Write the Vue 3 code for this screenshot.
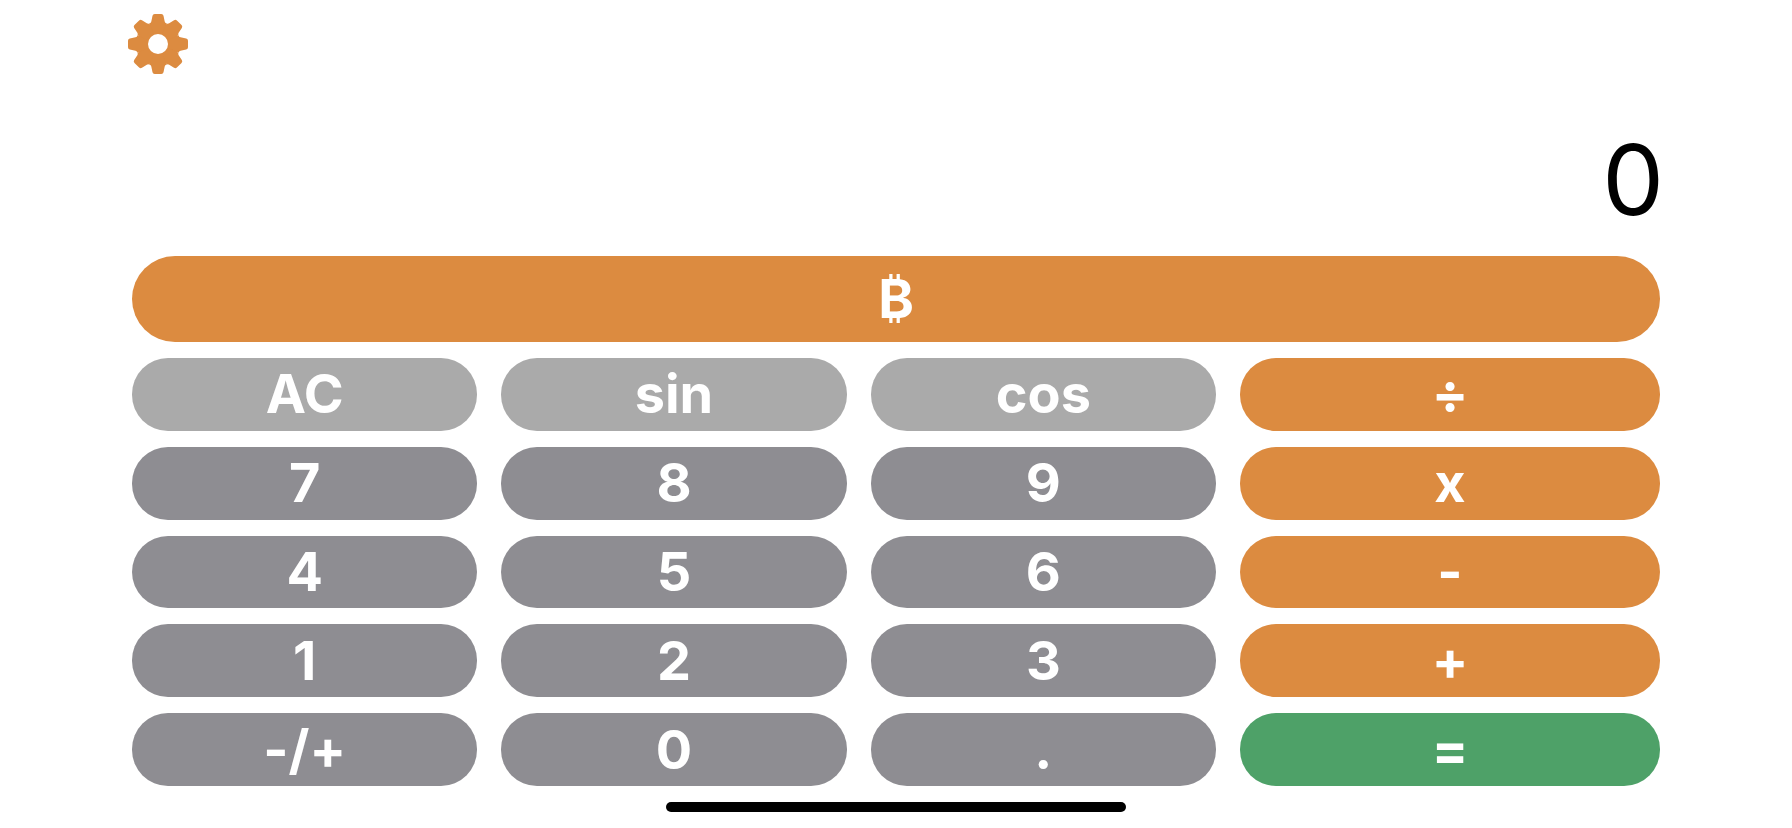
<script setup>
import { ref } from 'vue'

const keys = [
  { label: 'AC', kind: 'light' }, { label: 'sin', kind: 'light' }, { label: 'cos', kind: 'light' }, { label: '÷', kind: 'orange' },
  { label: '7', kind: 'dark' }, { label: '8', kind: 'dark' }, { label: '9', kind: 'dark' }, { label: 'x', kind: 'orange' },
  { label: '4', kind: 'dark' }, { label: '5', kind: 'dark' }, { label: '6', kind: 'dark' }, { label: '-', kind: 'orange' },
  { label: '1', kind: 'dark' }, { label: '2', kind: 'dark' }, { label: '3', kind: 'dark' }, { label: '+', kind: 'orange' },
  { label: '-/+', kind: 'dark' }, { label: '0', kind: 'dark' }, { label: '.', kind: 'dark' }, { label: '=', kind: 'green' },
]
const teeth = [0, 45, 90, 135, 180, 225, 270, 315]

const display = ref('0')
let stored = null
let operator = ''
let fresh = true

function show(value) {
  display.value = String(value)
  fresh = true
}

function evaluate() {
  if (!operator) return
  const a = stored
  const b = Number(display.value)
  show({ '+': a + b, '-': a - b, x: a * b, '÷': a / b }[operator])
  operator = ''
}

function press(label) {
  if (/^\d$/.test(label)) {
    display.value = fresh ? label : display.value + label
    fresh = label === '0' && display.value === '0'
  } else if (label === '.') {
    if (fresh) display.value = '0.'
    else if (!display.value.includes('.')) display.value += '.'
    fresh = false
  } else if (label === 'AC') {
    operator = ''
    show(0)
  } else if (label === 'sin') show(Math.sin(Number(display.value)))
  else if (label === 'cos') show(Math.cos(Number(display.value)))
  else if (label === '-/+') display.value = String(-Number(display.value))
  else if (label === '=') evaluate()
  else {
    evaluate()
    stored = Number(display.value)
    operator = label
    fresh = true
  }
}
</script>

<template>
  <main class="calculator">
    <header class="toolbar">
      <button class="settings" type="button" aria-label="Settings">
        <svg viewBox="-30 -30 60 60" aria-hidden="true">
          <circle r="21" />
          <path
            v-for="angle in teeth"
            :key="angle"
            :transform="`rotate(${angle})`"
            d="M-8.6-20.8Q-7.1-20.6-6.7-22.5L-5.5-28.2Q-5.1-30-3.3-30H3.3Q5.1-30 5.5-28.2L6.7-22.5Q7.1-20.6 8.6-20.8L0 0Z"
          />
          <circle class="hole" r="10" />
        </svg>
      </button>
    </header>
    <output class="display">{{ display }}</output>
    <button class="key orange bitcoin" type="button">₿</button>
    <section class="keypad">
      <button
        v-for="key in keys"
        :key="key.label"
        type="button"
        class="key"
        :class="key.kind"
        @click="press(key.label)"
      >{{ key.label }}</button>
    </section>
    <div class="home-bar"></div>
  </main>
</template>

<style>
body {
  background: #fff;
}
</style>

<style scoped>
.calculator {
  box-sizing: border-box;
  min-height: 100vh;
  padding: 14px 132px 16px;
  display: flex;
  flex-direction: column;
  font-family: Inter, "Liberation Sans", sans-serif;
  font-feature-settings: "calt" 0;
}

.toolbar {
  display: flex;
  margin-left: -4px;
}

.settings {
  width: 60px;
  height: 60px;
  padding: 0;
  border: 0;
  background: none;
  cursor: pointer;
}

.settings svg {
  display: block;
  fill: #dc8b40;
}

.settings .hole {
  fill: #fff;
}

.display {
  margin: 46px -4px 16px 0;
  font-size: 98px;
  line-height: 120px;
  text-align: right;
  color: #000;
}

.key {
  min-height: 64px;
  padding: 0;
  border: 0;
  border-radius: 36px;
  color: #fff;
  font: inherit;
  font-size: 54px;
  font-weight: 700;
  line-height: 64px;
  cursor: pointer;
}

.bitcoin {
  height: 86px;
  border-radius: 43px;
  margin-bottom: 16px;
}

.keypad {
  flex: 1;
  display: grid;
  grid-template-columns: repeat(3, 1fr) 420px;
  grid-auto-rows: 1fr;
  gap: 16px 24px;
}

.light {
  background: #aaaaaa;
}

.dark {
  background: #8e8d92;
}

.orange {
  background: #dc8b40;
}

.green {
  background: #4ea168;
}

.home-bar {
  width: 460px;
  height: 10px;
  margin: 16px auto 0;
  border-radius: 5px;
  background: #000;
}
</style>
